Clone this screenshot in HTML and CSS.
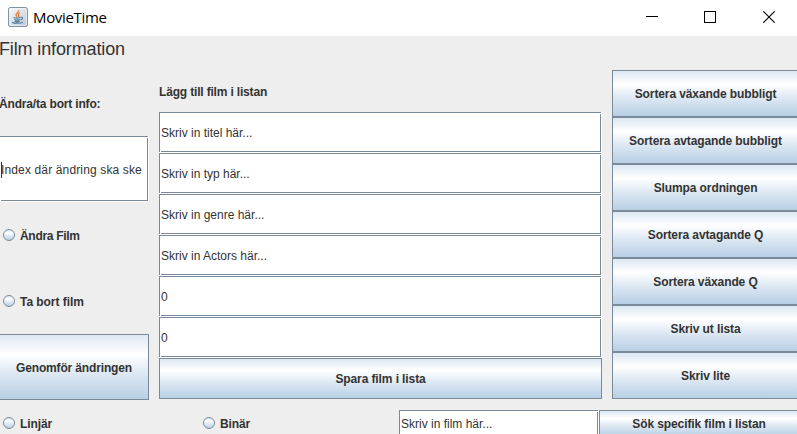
FILE: index.html
```html
<!DOCTYPE html>
<html lang="sv">
<head>
<meta charset="utf-8">
<title>MovieTime</title>
<link rel="stylesheet" href="styles.css">
</head>
<body>
<header class="titlebar">
  <svg class="app-icon" width="20" height="20" viewBox="0 0 20 20">
    <defs><linearGradient id="tile" x1="0" y1="0" x2="1" y2="1"><stop offset="0" stop-color="#fbfcfd"/><stop offset="1" stop-color="#b9c6d3"/></linearGradient></defs>
    <rect x=".6" y=".6" width="18.8" height="18.8" rx="1.5" fill="url(#tile)" stroke="#75899c"/>
    <rect x="1.6" y="1.6" width="16.8" height="16.8" rx="1" fill="none" stroke="#fff" stroke-opacity=".6"/>
    <path d="M10.8 3.2c.8 2-3.4 2.8-2.8 4.8.2.8 1 1.300 1.200 2M11.800 5.800c-2 1.200-1.600 1.800-1.100 2.700.3.600.1 1.100-.3 1.500" fill="none" stroke="#e8803c" stroke-width="1.300"/>
    <path d="M5.500 10.500c2 .7 5 .7 7 0M6.300 12.500c1.700.7 4 .7 5.700 0M6.700 14.100c1.500.600 3.300.600 4.800 0M12.700 10.300c2.600-.4 2.300 2-.2 2.700M4 15.200c1.500 1.400 9 1.300 11 0" fill="none" stroke="#557c9d" stroke-width="1.200"/>
  </svg>
  <span class="app-name">MovieTime</span>
  <svg class="controls" width="117" height="16" viewBox="0 0 117 16" fill="none" stroke="#000" shape-rendering="crispEdges">
    <path d="M0 6.500h12M58.500 1.500h11v11h-11z"/>
  </svg>
  <svg class="close" width="12" height="12" viewBox="0 0 12 12" fill="none" stroke="#000"><path d="M.3.3l11.400 11.400M11.700.3L.3 11.700" stroke-width="1.100"/></svg>
</header>
<main class="content">
  <h1><span>Film information</span></h1>
  <div class="panels">
    <section class="edit">
      <div class="label"><span>Ändra/ta bort info:</span></div>
      <div class="field caret"><span>Index där ändring ska ske</span></div>
      <div class="radio"><i></i><span>Ändra Film</span></div>
      <div class="radio"><i></i><span class="remove">Ta bort film</span></div>
      <div class="button apply"><span>Genomför ändringen</span></div>
    </section>
    <section class="add">
      <div class="label"><span>Lägg till film i listan</span></div>
      <div class="field"><span>Skriv in titel här...</span></div>
      <div class="field"><span>Skriv in typ här...</span></div>
      <div class="field"><span>Skriv in genre här...</span></div>
      <div class="field"><span>Skriv in Actors här...</span></div>
      <div class="field"><span>0</span></div>
      <div class="field"><span>0</span></div>
      <div class="button"><span>Spara film i lista</span></div>
    </section>
    <section class="actions">
      <div class="button"><span>Sortera växande bubbligt</span></div>
      <div class="button"><span>Sortera avtagande bubbligt</span></div>
      <div class="button"><span>Slumpa ordningen</span></div>
      <div class="button"><span>Sortera avtagande Q</span></div>
      <div class="button"><span>Sortera växande Q</span></div>
      <div class="button"><span>Skriv ut lista</span></div>
      <div class="button"><span>Skriv lite</span></div>
    </section>
  </div>
  <section class="search">
    <div class="radio"><i></i><span>Linjär</span></div>
    <div class="radio"><i></i><span>Binär</span></div>
    <div class="field"><span>Skriv in film här...</span></div>
    <div class="button"><span>Sök specifik film i listan</span></div>
  </section>
</main>
</body>
</html>
```
FILE: styles.css
```css
* { box-sizing: border-box; }
body {
  margin: 0;
  width: 797px;
  height: 434px;
  overflow: hidden;
  background: #eee;
  color: #333;
  font: 12px/14px "Liberation Sans", Arial, sans-serif;
  white-space: nowrap;
}
.titlebar {
  display: flex;
  align-items: flex-start;
  height: 36px;
  padding: 7px 22px 0 8px;
  background: #fff;
  color: #000;
}
.app-name { margin: 0 0 0 5px; font: 15px/20px "Open Sans", "Noto Sans", sans-serif; letter-spacing: -.33px; }
.controls { margin: 3px 0 0 auto; }
.close { margin-top: 4px; }
.content { width: 800px; margin-left: -1px; }
h1 { height: 34px; margin: 0; padding-top: 3px; font-size: 18px; font-weight: normal; line-height: 20px; letter-spacing: -.13px; }
.panels { display: grid; grid-template-columns: 150px 443px 187px; gap: 10px; height: 329px; align-items: start; }
.edit { display: grid; grid-template-rows: repeat(5, 66px); }
.add { display: grid; grid-template-rows: 42px repeat(7, 41px); }
.actions { display: grid; grid-template-rows: repeat(7, 47px); }
.label, .radio, .field, .button { display: flex; align-items: center; min-width: 0; }
.label, .radio, .button { font-weight: bold; letter-spacing: -.1px; }
.label { padding-top: 1px; letter-spacing: -.17px; }
.field { position: relative; padding-left: 2px; background: #fff; }
.field::before, .field::after { content: ""; position: absolute; border: 1px solid #7a8a99; inset: 0 1px 1px 0; }
.field::after { inset: 1px 0 0 1px; border-color: #fff; }
.field span { position: relative; z-index: 1; }
.caret { padding-top: 2px; letter-spacing: .14px; }
.caret span::before { content: ""; position: absolute; left: 0; top: -1px; width: 1px; height: 16px; background: #333; }
.button {
  justify-content: center;
  border: 1px solid #7a8a99;
  background: linear-gradient(#dde8f3, #fff 30%, #dde8f3 60%, #b8cfe5);
}
.apply { padding-top: 2px; letter-spacing: -.15px; }
.radio { padding-left: 4px; gap: 5px; }
.radio i { width: 12px; height: 12px; border: 1px solid #7a8a99; border-radius: 50%; background: linear-gradient(#dde8f3, #fff 30%, #dde8f3 60%, #b8cfe5); }
.edit .radio span { padding-top: 2px; letter-spacing: -.3px; }
.edit .radio .remove { letter-spacing: -.05px; }
.search { display: grid; grid-template-columns: repeat(4, 200px); grid-template-rows: 27px; margin-top: 11px; }
.search .radio i { margin-top: -1px; }
```
